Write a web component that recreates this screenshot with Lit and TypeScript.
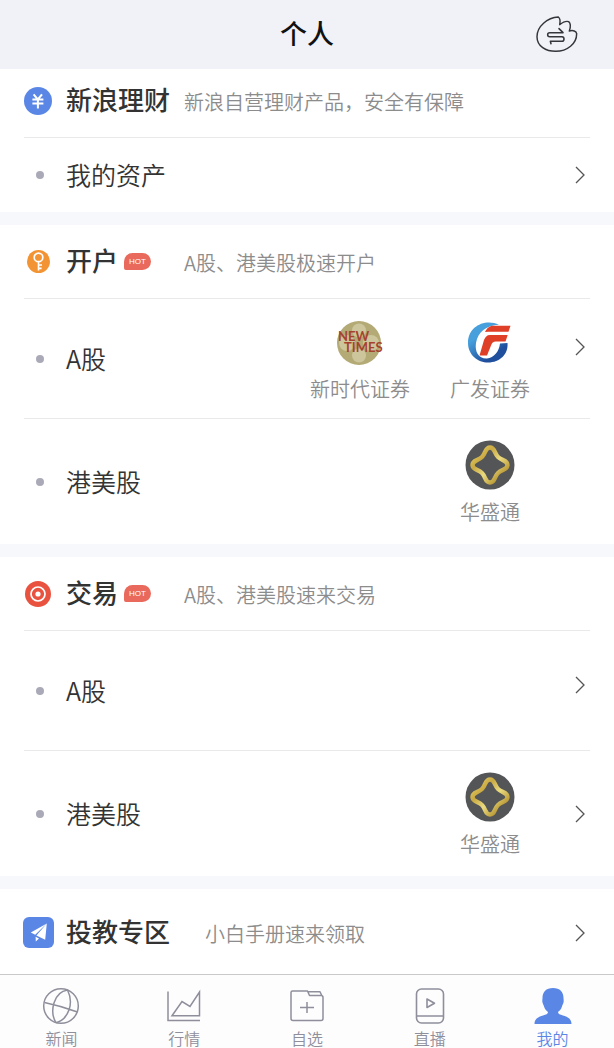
import { LitElement, html, css, nothing, type TemplateResult } from "lit";
import { customElement } from "lit/decorators.js";
import { classMap } from "lit/directives/class-map.js";

/* ---------- icons ---------- */

const flameIcon = html`<svg width="42" height="38" viewBox="686 42 126 114" aria-hidden="true">
  <g fill="none" stroke="#34363b" stroke-linejoin="round" stroke-linecap="round">
    <path stroke-width="4.4" d="M753 48 C720 50 689 76 689 107 C689 136 716 151 745 151 C780 151 808 128 808 98 C807 90 797 87 786 90 C790 78 789 66 784 62 C776 59 766 64 757 71 C759 62 758 52 753 48Z" />
    <path stroke-width="4.6" d="M755 83 L767 95 H727 C719 95 719 107 727 107 H764 C772 107 772 121 764 121 H729 L731 128" />
  </g>
</svg>`;

const yuanIcon = html`<svg width="28" height="28" viewBox="0 0 28 28" aria-hidden="true">
  <circle cx="14" cy="14" r="14" fill="#5a87e6" />
  <path d="M9.6 7.4 L13.8 12.4 L18 7.4 M8.4 12.6 H19.4 M8.4 16.4 H19.4 M13.9 12.4 V21.4" fill="none" stroke="#fff" stroke-width="2" />
</svg>`;

const keyIcon = html`<svg width="23" height="23" viewBox="0 0 23 23" aria-hidden="true">
  <circle cx="11.5" cy="11.5" r="11.5" fill="#f39434" />
  <circle cx="11.5" cy="7.4" r="4.3" fill="none" stroke="#fff" stroke-width="1.7" />
  <path d="M11.5 11.8 V20.4 M11.5 15 H15 M11.5 18.4 H14.6" fill="none" stroke="#fff" stroke-width="1.6" />
</svg>`;

const targetIcon = html`<svg width="26" height="26" viewBox="0 0 26 26" aria-hidden="true">
  <circle cx="13" cy="13" r="13" fill="#e8523f" />
  <circle cx="13" cy="13" r="7" fill="none" stroke="#fff" stroke-width="1.7" />
  <circle cx="13" cy="13" r="2.6" fill="#fff" />
</svg>`;

const planeIcon = html`<svg width="31" height="31" viewBox="0 0 31 31" aria-hidden="true">
  <rect width="31" height="31" rx="6" fill="#5a87e6" />
  <path d="M23.8 6.6 L7.8 15.6 L12.2 17.8 Z M23.8 6.6 L13.4 18.6 L22.2 22.8 Z M12.6 19.8 L16 21.6 L12.8 24.6 Z" fill="#fff" />
</svg>`;

const newTimesLogo = html`<svg width="50" height="50" viewBox="0 0 50 50" aria-hidden="true">
  <circle cx="24" cy="26" r="22" fill="#b3aa76" />
  <g fill="#cdc69c">
    <circle cx="24" cy="13.5" r="7" /><circle cx="24" cy="38.5" r="7" />
    <circle cx="12" cy="26" r="8" /><circle cx="36" cy="26" r="8" />
  </g>
  <g font-family="Lato, sans-serif" font-size="13" font-weight="700" fill="#a5432f">
    <text x="3" y="24">NEW</text><text x="9" y="35">TIMES</text>
  </g>
</svg>`;

const gfLogo = html`<svg width="50" height="50" viewBox="0 0 50 50" aria-hidden="true">
  <defs>
    <linearGradient id="gf-ring" x1="0" y1="0" x2="0.7" y2="1">
      <stop offset="0.35" stop-color="#479fdc" />
      <stop offset="0.85" stop-color="#1f4f9d" />
    </linearGradient>
  </defs>
  <path fill="url(#gf-ring)" d="M34 7.500 C20 1.500 3 9 3 26 C3 38 13 45.500 23 45.500 C35 45.500 43.500 37 42.500 26 L35 26.500 C34 35 29 40.500 22 41.500 C14 42 9.500 35 11 26 C13 15 21 8.500 34 7.500Z" />
  <path fill="#df3f27" d="M20 15 C22 10.500 25 8.700 29 8.700 H45.500 L43.500 14.800 H27 C24.500 14.800 22 14.800 20 15Z M25 18 H42.700 L40.500 24.600 H31 C28 24.600 27 26 26 28.500 L22 38.500 H14.500 L19 23 C20.300 20 21.800 18 25 18Z" />
</svg>`;

const huashengLogo = html`<svg width="50" height="50" viewBox="0 0 50 50" aria-hidden="true">
  <defs>
    <linearGradient id="hs-gold" x1="0" y1="0" x2="1" y2="1">
      <stop offset="0" stop-color="#e9d56a" />
      <stop offset="0.3" stop-color="#c9a943" />
      <stop offset="0.55" stop-color="#eadb80" />
      <stop offset="0.8" stop-color="#bf9f3c" />
      <stop offset="1" stop-color="#e2cd6c" />
    </linearGradient>
  </defs>
  <circle cx="25" cy="25" r="24.5" fill="#545557" />
  <path d="M25 7.500 C30 7.500 29 13 33 17 C37 21 42.500 20 42.500 25 C42.500 30 37 29 33 33 C29 37 30 42.500 25 42.500 C20 42.500 21 37 17 33 C13 29 7.500 30 7.500 25 C7.500 20 13 21 17 17 C21 13 20 7.500 25 7.500Z" fill="none" stroke="url(#hs-gold)" stroke-width="4.4" />
</svg>`;

const chevron = html`<svg width="10" height="18" viewBox="0 0 10 18" aria-hidden="true">
  <path d="M1 1 L9 9 L1 17" fill="none" stroke="#555" stroke-width="1.3" />
</svg>`;

const newsIcon = html`<svg width="38" height="38" viewBox="0 0 38 38" aria-hidden="true">
  <g fill="none" stroke="#8f8f9c" stroke-width="1.5">
    <circle cx="19" cy="19" r="17.300" />
    <path d="M2.500 15.500 Q19 19 35.500 25 M25.500 3 C12 5 7 24 14 35.800 M25.500 3 C32 16 27 32 14 35.800" />
  </g>
</svg>`;

const chartIcon = html`<svg width="38" height="38" viewBox="0 0 38 38" aria-hidden="true">
  <path d="M3 4.500 V33.500 H35 M7 28.800 L17 14.500 L25 19.500 L34.500 5 V28.800 Z" fill="none" stroke="#8f8f9c" stroke-width="1.5" />
</svg>`;

const folderIcon = html`<svg width="38" height="38" viewBox="0 0 38 38" aria-hidden="true">
  <g fill="none" stroke="#8f8f9c" stroke-width="1.5" stroke-linejoin="round">
    <path d="M4.500 4 H19.500 L21.500 8.500 H33 Q35 8.500 35 10.500 V31.500 Q35 33.500 33 33.500 H5 Q3 33.500 3 31.500 V5.500 Q3 4 4.500 4Z M19.500 4.800 H32 L34 9" />
    <path d="M19 15 V26 M12 20.500 H26" />
  </g>
</svg>`;

const liveIcon = html`<svg width="38" height="38" viewBox="0 0 38 38" aria-hidden="true">
  <g fill="none" stroke="#8f8f9c" stroke-width="1.6" stroke-linejoin="round">
    <rect x="5.500" y="2" width="27" height="34" rx="5" />
    <path d="M5.500 29 H32.500 M16 12 V20.500 L23.500 16.200 Z" />
  </g>
</svg>`;

const personIcon = html`<svg width="38" height="38" viewBox="0 0 38 38" aria-hidden="true">
  <path fill="#5a87e6" d="M19 1 C26 1 29.500 5 29.500 11 C29.500 12.500 30 14 29.500 15.500 C29 17.500 28.300 18 27.800 20 C27 22.500 25.500 23.500 24 25 C24 27 26 27.500 29 28.500 C34 30 37.500 32 37.500 37 H0.500 C0.500 32 4 30 9 28.500 C12 27.500 14 27 14 25 C12.500 23.500 11 22.500 10.200 20 C9.700 18 9 17.500 8.500 15.500 C8 14 8.500 12.500 8.500 11 C8.500 5 12 1 19 1Z" />
</svg>`;

/* ---------- data ---------- */

interface Broker {
  name: string;
  logo: TemplateResult;
}

interface Item {
  label: string;
  size: "short" | "tall" | "last";
  brokers?: Broker[];
  arrow: "none" | "middle" | "raised" | "logo";
}

interface Section {
  id: string;
  title: string;
  note: string;
  icon: TemplateResult;
  hot?: boolean;
  link?: boolean;
  items: Item[];
}

const newTimes: Broker = { name: "新时代证券", logo: newTimesLogo };
const guangfa: Broker = { name: "广发证券", logo: gfLogo };
const huasheng: Broker = { name: "华盛通", logo: huashengLogo };

const sections: Section[] = [
  {
    id: "finance",
    title: "新浪理财",
    note: "新浪自营理财产品，安全有保障",
    icon: yuanIcon,
    items: [{ label: "我的资产", size: "short", arrow: "middle" }],
  },
  {
    id: "open",
    title: "开户",
    note: "A股、港美股极速开户",
    icon: keyIcon,
    hot: true,
    items: [
      { label: "A股", size: "tall", brokers: [newTimes, guangfa], arrow: "logo" },
      { label: "港美股", size: "last", brokers: [huasheng], arrow: "none" },
    ],
  },
  {
    id: "trade",
    title: "交易",
    note: "A股、港美股速来交易",
    icon: targetIcon,
    hot: true,
    items: [
      { label: "A股", size: "tall", arrow: "raised" },
      { label: "港美股", size: "last", brokers: [huasheng], arrow: "middle" },
    ],
  },
  {
    id: "learn",
    title: "投教专区",
    note: "小白手册速来领取",
    icon: planeIcon,
    link: true,
    items: [],
  },
];

const tabs = [
  { id: "news", label: "新闻", icon: newsIcon },
  { id: "market", label: "行情", icon: chartIcon },
  { id: "watchlist", label: "自选", icon: folderIcon },
  { id: "live", label: "直播", icon: liveIcon },
  { id: "me", label: "我的", icon: personIcon, active: true },
];

@customElement("app-root")
export class AppRoot extends LitElement {
  static styles = css`
    :host {
      display: flex;
      flex-direction: column;
      min-height: 100vh;
      background: #fff;
      color: #333;
      font-family: "Noto Sans CJK SC", sans-serif;
      font-weight: 350;
    }
    svg { display: block; flex: none; }
    a { color: inherit; text-decoration: none; }
    h1, h2, p, ul { margin: 0; padding: 0; font-weight: inherit; list-style: none; }

    .top {
      display: grid;
      grid-template-columns: 1fr auto 1fr;
      align-items: center;
      height: 69px;
      box-sizing: border-box;
      padding: 0 36px 2px;
      background: #f0f2f8;
    }
    .top h1 {
      grid-column: 2;
      padding-bottom: 2px;
      font-size: 27px;
      line-height: 40px;
      font-weight: 500;
      color: #111;
    }
    .top button {
      justify-self: end;
      padding: 0;
      border: 0;
      background: none;
      cursor: pointer;
    }

    main {
      flex: 1;
      display: flex;
      flex-direction: column;
      gap: 13px;
      background: #f7f8fc;
    }
    section { padding: 0 24px; background: #fff; }
    section:last-child { flex: 1; }

    .head, .row { display: flex; align-items: center; box-sizing: border-box; }
    .head { height: 73px; }
    .head.compact { height: 68px; padding-bottom: 4px; }
    .head.link { height: 85px; padding-top: 2px; }
    .row { border-top: 1px solid #e9e9eb; }
    .row.short { height: 75px; }
    .row.tall { height: 120px; }
    .row.last { height: 126px; }

    .mark { flex: none; width: 28px; margin-right: 14px; display: flex; justify-content: center; }
    .row .mark { width: 32px; margin-right: 10px; }
    .dot { width: 8px; height: 8px; border-radius: 50%; background: #a9a9b8; }

    .title {
      display: flex;
      align-items: center;
      gap: 6px;
      min-width: 118px;
      font-size: 26px;
      line-height: 36px;
    }
    .title h2 { padding-bottom: 4px; font-size: inherit; font-weight: 500; }
    .link .title { min-width: 139px; }
    .hot {
      width: 27px;
      border-radius: 9px 9px 9px 2px;
      background: #e9695c;
      color: #fff;
      font-family: "Liberation Sans", sans-serif;
      font-size: 8px;
      line-height: 17px;
      text-align: center;
    }
    .note { padding-top: 2px; font-size: 20px; line-height: 28px; color: #8c8c8c; }
    .label { padding-bottom: 2px; font-size: 25px; line-height: 36px; }

    .brokers { display: flex; gap: 40px; margin-left: auto; }
    .brokers li {
      display: flex;
      flex-direction: column;
      align-items: center;
      gap: 10px;
      min-width: 80px;
      font-size: 20px;
      line-height: 24px;
      color: #8c8c8c;
    }
    .arrow {
      display: flex;
      justify-content: flex-end;
      width: 60px;
      box-sizing: border-box;
      padding-right: 5px;
    }
    .arrow:not(.brokers + .arrow) { margin-left: auto; }
    .arrow.raised { padding-bottom: 12px; }
    .arrow.logo { padding-bottom: 24px; }

    nav {
      display: grid;
      grid-template-columns: repeat(5, 1fr);
      height: 74px;
      box-sizing: border-box;
      border-top: 1px solid #c9c9cc;
      background: #fdfdfe;
    }
    .tab {
      display: flex;
      flex-direction: column;
      align-items: center;
      gap: 3px;
      padding-top: 12px;
      font-size: 16px;
      line-height: 20px;
      color: #8f8f9c;
    }
    .tab.active { color: #5a87e6; }
  `;

  private renderArrow(kind: Item["arrow"]) {
    return html`<span class=${classMap({ arrow: true, [kind]: true })}>
      ${kind === "none" ? nothing : chevron}
    </span>`;
  }

  private renderHead(s: Section) {
    const body = html`
      <span class="mark">${s.icon}</span>
      <div class="title">
        <h2>${s.title}</h2>
        ${s.hot ? html`<span class="hot">HOT</span>` : nothing}
      </div>
      <p class="note">${s.note}</p>`;
    return s.link
      ? html`<a class="head link" href="#${s.id}">${body}${this.renderArrow("middle")}</a>`
      : html`<div class=${classMap({ head: true, compact: !s.hot })}>${body}</div>`;
  }

  private renderItem(s: Section, item: Item, index: number) {
    return html`<a class="row ${item.size}" href="#${s.id}-${index + 1}">
      <span class="mark"><span class="dot"></span></span>
      <span class="label">${item.label}</span>
      ${item.brokers
        ? html`<ul class="brokers">
            ${item.brokers.map((b) => html`<li>${b.logo}<span>${b.name}</span></li>`)}
          </ul>`
        : nothing}
      ${this.renderArrow(item.arrow)}
    </a>`;
  }

  render() {
    return html`
      <header class="top">
        <h1>个人</h1>
        <button type="button" aria-label="切换">${flameIcon}</button>
      </header>
      <main>
        ${sections.map(
          (s) => html`<section>
            ${this.renderHead(s)} ${s.items.map((item, i) => this.renderItem(s, item, i))}
          </section>`
        )}
      </main>
      <nav>
        ${tabs.map(
          (t) => html`<a
            class=${classMap({ tab: true, active: !!t.active })}
            href="#${t.id}"
            aria-current=${t.active ? "page" : nothing}
            >${t.icon}<span>${t.label}</span></a
          >`
        )}
      </nav>
    `;
  }
}
